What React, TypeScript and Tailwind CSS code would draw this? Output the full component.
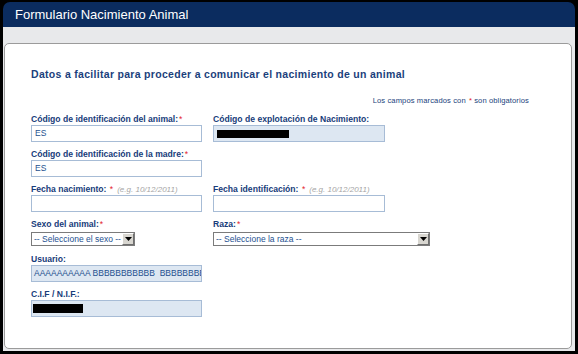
import React from 'react';

// Formulario de comunicación de nacimiento (estilo intranet antiguo)

const label = 'h-[12px] leading-[12px] text-[8.6px] font-bold text-[#173c7a] whitespace-nowrap';
const inputBase = 'h-[17px] border border-[#a7bcd6] px-[3px] text-[8.5px] leading-[15px] text-[#24508f] overflow-hidden whitespace-nowrap';

function Req() {
  return <span className="text-[#e3262d] font-normal ml-px">*</span>;
}

function Hint() {
  return <span className="text-[8px] italic font-normal text-[#a6a6a6] ml-[4px]">(e.g. 10/12/2011)</span>;
}

function Select({ text, width }: { text: string; width: string }) {
  return (
    <div className="h-[17px] pt-[2px]">
      <div className={`${width} h-[14px] flex border border-[#7b7b7b] bg-white`}>
        <span className="flex-1 pl-[2px] text-[8.5px] leading-[12px] text-[#24508f] whitespace-nowrap overflow-hidden">{text}</span>
        <span className="w-[12px] h-[12px] bg-[#d8d6d0] border border-t-white border-l-white border-r-[#6f6f6f] border-b-[#6f6f6f] flex items-center justify-center">
          <svg width="7" height="4" viewBox="0 0 7 4"><path d="M0 0h7L3.5 4z" fill="#000" /></svg>
        </span>
      </div>
    </div>
  );
}

function Field({ children, input }: { children: React.ReactNode; input: React.ReactNode }) {
  return (
    <div className="flex flex-col">
      <div className={label}>{children}</div>
      {input}
    </div>
  );
}

export default function App() {
  return (
    <div className="w-[578px] h-[354px] bg-black pt-[2px] px-[3px] pb-[3px] flex flex-col" style={{ fontFamily: '"Liberation Sans", Arial, sans-serif' }}>
      <div className="h-[25px] shrink-0 bg-[#0b2c5f] rounded-t-[7px] pl-[12px] flex items-center">
        <span className="text-white text-[13px] leading-none">Formulario Nacimiento Animal</span>
      </div>
      <div className="flex-1 flex bg-[#e8e9eb] pt-[16px] pl-px pr-[3px] pb-[2px]">
        <div className="flex-1 bg-white border border-[#9b9b9b] rounded-[5px] pt-[23px] pl-[26px] pr-[42px]">
          <h1 className="h-[14px] leading-[14px] text-[10.5px] font-bold tracking-[0.3px] text-[#1b3f7c] whitespace-nowrap">
            Datos a facilitar para proceder a comunicar el nacimiento de un animal
          </h1>
          <p className="mt-[14px] h-[12px] leading-[12px] text-right text-[7.6px] tracking-[0.1px] text-[#1b3f7c]">
            Los campos marcados con <Req /> son obligatorios
          </p>

          <div className="mt-[6px] grid grid-cols-[182px_1fr] gap-y-[6px]">
            <Field input={<div className={`${inputBase} w-[171px] bg-white`}>ES</div>}>
              Código de identificación del animal:<Req />
            </Field>
            <Field
              input={
                <div className={`${inputBase} w-[172px] bg-[#dde7f2] pt-[4px]`}>
                  <div className="w-[72px] h-[8px] bg-black" />
                </div>
              }
            >
              Código de explotación de Nacimiento:
            </Field>

            <Field input={<div className={`${inputBase} w-[171px] bg-white`}>ES</div>}>
              Código de identificación de la madre:<Req />
            </Field>
            <div />

            <Field input={<div className={`${inputBase} w-[171px] bg-white`} />}>
              Fecha nacimiento: <Req />
              <Hint />
            </Field>
            <Field input={<div className={`${inputBase} w-[172px] bg-white`} />}>
              Fecha identificación: <Req />
              <Hint />
            </Field>

            <Field input={<Select text="-- Seleccione el sexo --" width="w-[104px]" />}>
              Sexo del animal:<Req />
            </Field>
            <Field input={<Select text="-- Seleccione la raza --" width="w-[217px]" />}>
              Raza:<Req />
            </Field>

            <Field input={<div className={`${inputBase} w-[171px] bg-[#dde7f2] pl-[2px]`}>AAAAAAAAAA BBBBBBBBBBB&nbsp; BBBBBBBBBB</div>}>
              Usuario:
            </Field>
            <div />

            <Field
              input={
                <div className={`${inputBase} w-[171px] bg-[#dde7f2] pl-px pt-[3px]`}>
                  <div className="w-[50px] h-[9px] bg-black" />
                </div>
              }
            >
              C.I.F / N.I.F.:
            </Field>
            <div />
          </div>
        </div>
      </div>
    </div>
  );
}
